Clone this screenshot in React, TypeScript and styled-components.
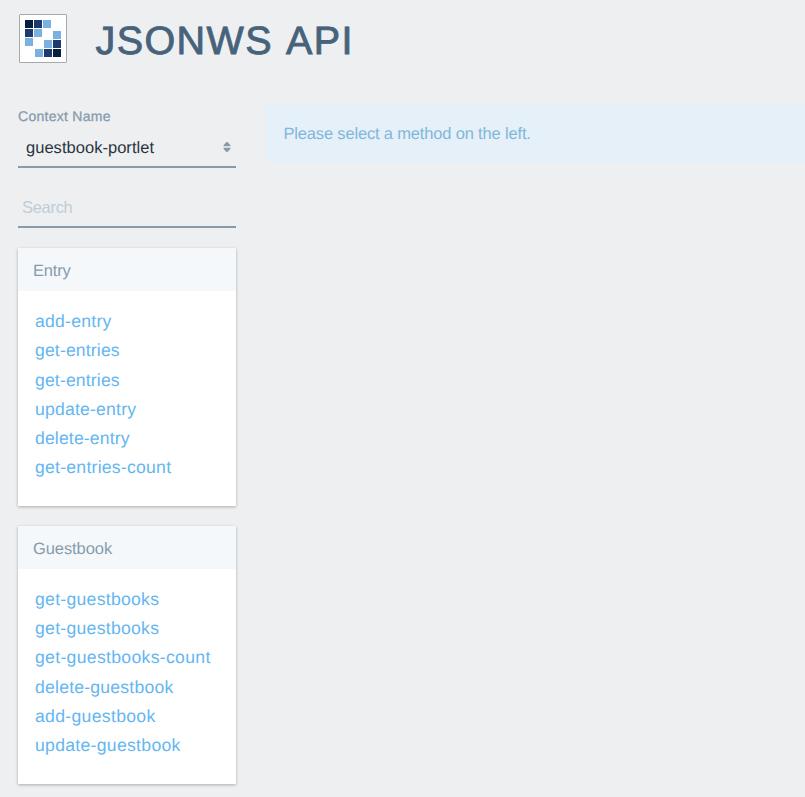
import React from "react";
import styled, { createGlobalStyle } from "styled-components";

const GlobalStyle = createGlobalStyle`
  * { box-sizing: border-box; }
  body {
    margin: 0;
    background: #eeeff1;
    font-family: "Liberation Sans", Arial, sans-serif;
    font-size: 16.5px;
    text-rendering: geometricPrecision;
    overflow: hidden;
  }
`;

const Page = styled.div`
  height: 797px;
  overflow: hidden;
  padding: 14px 0 0 18px;
`;

const Header = styled.header`
  display: flex;
  height: 90px;
`;

const Logo = styled.svg`
  display: block;
  width: 48px;
  height: 49px;
  margin-left: 1px;
`;

const Title = styled.h1`
  margin: 4px 0 0 28.5px;
  color: #47637b;
  font-size: 39.5px;
  font-weight: 400;
  line-height: 46px;
  letter-spacing: 1.4px;
  word-spacing: 3px;
  -webkit-text-stroke: 0.9px #47637b;
  white-space: nowrap;
`;

const Content = styled.div`
  display: grid;
  grid-template-columns: 218px 1fr;
  column-gap: 30px;
  align-items: start;
`;

const Sidebar = styled.aside`
  display: flex;
  flex-direction: column;
`;

const Label = styled.label`
  height: 24px;
  color: #869cad;
  font-size: 14px;
  line-height: 24px;
  letter-spacing: 0.27px;
  -webkit-text-stroke: 0.3px #869cad;
`;

const Select = styled.div`
  display: flex;
  align-items: center;
  justify-content: space-between;
  height: 40px;
  padding: 2px 5px 0 8px;
  border-bottom: 2px solid #869cad;
  color: #27353f;
  letter-spacing: 0.03px;
`;

const Arrows = styled.svg`
  display: block;
  width: 8px;
  height: 10px;
  margin-top: -2px;
`;

const Search = styled.input`
  width: 218px;
  height: 40px;
  margin: 20px 0;
  padding: 0 4px;
  border: 0;
  border-bottom: 2px solid #869cad;
  border-radius: 0;
  outline: 0;
  background: transparent;
  font: inherit;
  letter-spacing: -0.3px;
  &::placeholder { color: #bfcdd6; opacity: 1; }
`;

const Panel = styled.section`
  height: 258px;
  margin-bottom: 20px;
  background: #fff;
  box-shadow: 0 1px 3px rgba(0, 0, 0, 0.28);
`;

const PanelTitle = styled.h2<{ $spacing: number }>`
  height: 43px;
  margin: 0;
  padding-left: 15px;
  background: #f4f8fb;
  color: #869cad;
  font-size: 16.5px;
  font-weight: 400;
  line-height: 46px;
  letter-spacing: ${(p) => p.$spacing}px;
`;

const Methods = styled.ul<{ $top: number }>`
  margin: 0;
  padding: ${(p) => p.$top}px 0 0 17px;
  list-style: none;
`;

const Method = styled.li<{ $spacing: number }>`
  height: 29.2px;
  color: #65b6f0;
  font-size: 17.6px;
  line-height: 29.2px;
  letter-spacing: ${(p) => p.$spacing}px;
  white-space: nowrap;
`;

const Notice = styled.div`
  height: 59px;
  padding-left: 17.5px;
  border-radius: 3px 0 0 3px;
  background: #e5f0f9;
  color: #81b7d9;
  line-height: 60px;
  letter-spacing: -0.17px;
`;

const squares: [number, number, string][] = [
  [6, 6, "#05203d"], [15, 6, "#1c3a6e"], [24, 6, "#79b1e1"],
  [6, 15, "#1c3a6e"], [15, 15, "#79b1e1"], [34, 17, "#79b1e1"],
  [6, 24, "#79b1e1"], [25, 26, "#79b1e1"], [34, 26, "#1c3a6e"],
  [16, 35, "#79b1e1"], [25, 35, "#1c3a6e"], [34, 35, "#05203d"],
];

const panels: { title: string; spacing: number; top: number; methods: [string, number][] }[] = [
  {
    title: "Entry",
    spacing: -0.2,
    top: 16.2,
    methods: [
      ["add-entry", 0.25], ["get-entries", 0.15], ["get-entries", 0.15],
      ["update-entry", 0.2], ["delete-entry", 0.15], ["get-entries-count", 0.25],
    ],
  },
  {
    title: "Guestbook",
    spacing: -0.08,
    top: 16,
    methods: [
      ["get-guestbooks", 0.28], ["get-guestbooks", 0.28], ["get-guestbooks-count", 0.32],
      ["delete-guestbook", 0.22], ["add-guestbook", 0.32], ["update-guestbook", 0.3],
    ],
  },
];

export default function App() {
  return (
    <>
      <GlobalStyle />
      <Page>
        <Header>
          <Logo viewBox="0 0 48 49">
            <rect x="0.5" y="0.5" width="47" height="48" rx="0.5" fill="#fff" stroke="#a9a9ab" />
            {squares.map(([x, y, fill]) => (
              <rect key={`${x}-${y}`} x={x} y={y} width="8" height="8" fill={fill} />
            ))}
          </Logo>
          <Title>JSONWS API</Title>
        </Header>
        <Content>
          <Sidebar>
            <Label>Context Name</Label>
            <Select>
              guestbook-portlet
              <Arrows viewBox="0 0 8 10">
                <path d="M3.5 0h1L7.4 3v1.2H.6V3zM3.5 10h1l2.9-3V5.8H.6V7z" fill="#869cad" />
              </Arrows>
            </Select>
            <Search placeholder="Search" />
            {panels.map((panel) => (
              <Panel key={panel.title}>
                <PanelTitle $spacing={panel.spacing}>{panel.title}</PanelTitle>
                <Methods $top={panel.top}>
                  {panel.methods.map(([name, spacing], i) => (
                    <Method key={i} $spacing={spacing}>{name}</Method>
                  ))}
                </Methods>
              </Panel>
            ))}
          </Sidebar>
          <Notice>Please select a method on the left.</Notice>
        </Content>
      </Page>
    </>
  );
}
